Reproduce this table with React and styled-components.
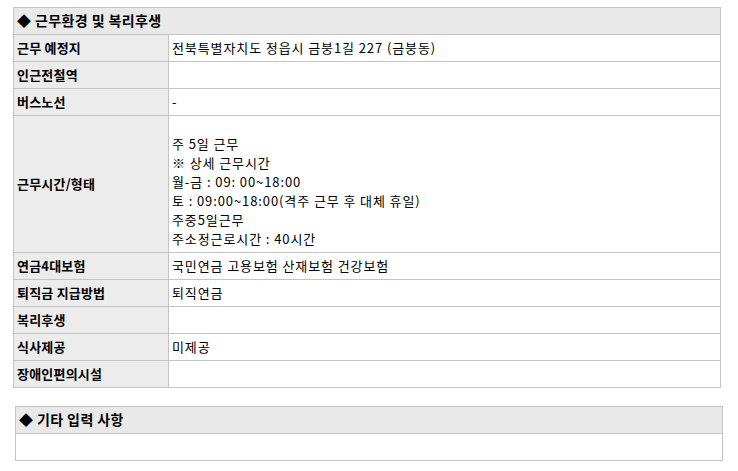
import styled, { createGlobalStyle } from "styled-components";

const GlobalStyle = createGlobalStyle`
	html, body {
		margin: 0;
		padding: 0;
		background: #ffffff;
	}
	body {
		font-family: "Noto Sans CJK KR", "Noto Sans", "Liberation Sans", sans-serif;
		color: #000;
	}
`;

const Page = styled.div`
	padding: 7px 0 0 13px;
	width: 738px;
	box-sizing: border-box;
`;

const Section = styled.section`
	margin-left: ${(p) => p.$shift || 0}px;
	margin-bottom: 18px;
`;

const Table = styled.table`
	width: 708px;
	border-collapse: collapse;
	table-layout: fixed;
	font-size: 13px;
	line-height: 19px;
`;

const LabelCol = styled.col`
	width: 155px;
`;

const TitleCell = styled.th`
	height: 24px;
	padding: 0 3px 2px;
	background: #e9e9e9;
	border: 1px solid #c3c3c3;
	text-align: left;
	font-size: 14px;
	font-weight: 700;
	letter-spacing: 0.4px;
`;

const Label = styled.th`
	height: 24px;
	padding: 0 3px 2px;
	background: #ececec;
	border: 1px solid #c3c3c3;
	text-align: left;
	font-weight: 700;
	letter-spacing: 0.2px;
	white-space: nowrap;
`;

const Value = styled.td`
	height: 24px;
	padding: ${(p) => (p.$multi ? "18px 3px 4px" : "0 3px 2px")};
	background: #ffffff;
	border: 1px solid #c3c3c3;
	vertical-align: middle;
	letter-spacing: 0.9px;
`;

const Line = styled.div`
	height: 19px;
	white-space: nowrap;
`;

const rows = [
	["근무 예정지", "전북특별자치도 정읍시 금붕1길 227 (금붕동)"],
	["인근전철역", ""],
	["버스노선", "-"],
	[
		"근무시간/형태",
		[
			"주 5일 근무",
			"※ 상세 근무시간",
			"월-금 : 09: 00~18:00",
			"토 : 09:00~18:00(격주 근무 후 대체 휴일)",
			"주중5일근무",
			"주소정근로시간 : 40시간",
		],
	],
	["연금4대보험", "국민연금 고용보험 산재보험 건강보험"],
	["퇴직금 지급방법", "퇴직연금"],
	["복리후생", ""],
	["식사제공", "미제공"],
	["장애인편의시설", ""],
];

const App = () => {
	return (
		<Page>
			<GlobalStyle />
			<Section>
				<Table>
					<colgroup>
						<LabelCol />
						<col />
					</colgroup>
					<thead>
						<tr>
							<TitleCell colSpan={2}>◆ 근무환경 및 복리후생</TitleCell>
						</tr>
					</thead>
					<tbody>
						{rows.map(([label, value]) => (
							<tr key={label}>
								<Label>{label}</Label>
								{Array.isArray(value) ? (
									<Value $multi>
										{value.map((l) => (
											<Line key={l}>{l}</Line>
										))}
									</Value>
								) : (
									<Value>{value}</Value>
								)}
							</tr>
						))}
					</tbody>
				</Table>
			</Section>
			<Section $shift={2}>
				<Table>
					<thead>
						<tr>
							<TitleCell>◆ 기타 입력 사항</TitleCell>
						</tr>
					</thead>
					<tbody>
						<tr>
							<Value></Value>
						</tr>
					</tbody>
				</Table>
			</Section>
		</Page>
	);
};

export default App;
